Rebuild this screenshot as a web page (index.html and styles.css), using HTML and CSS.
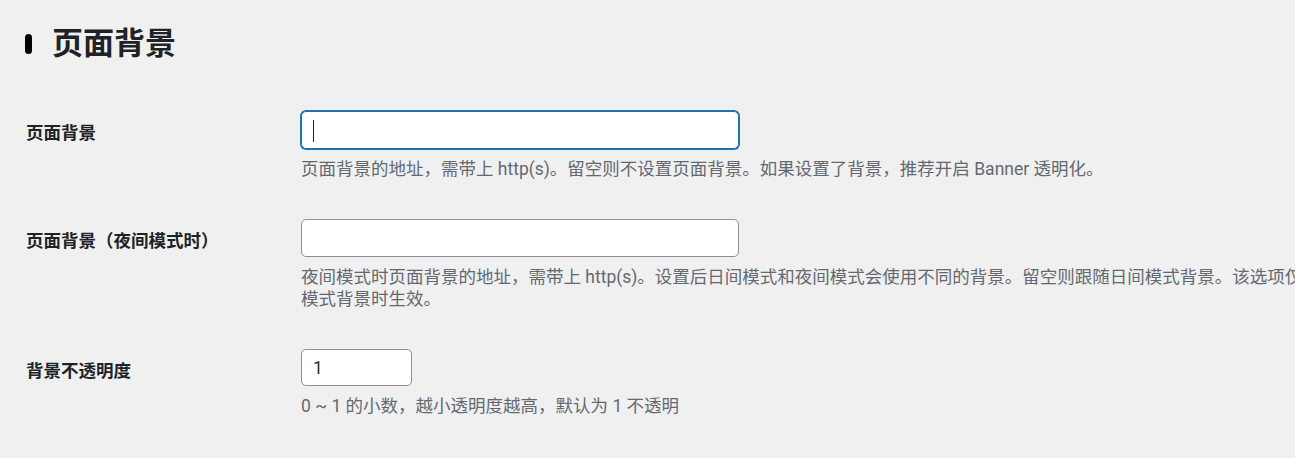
FILE: index.html
```html
<!DOCTYPE html>
<html lang="zh-CN">
<head>
<meta charset="utf-8">
<title>页面背景</title>
<link rel="stylesheet" href="styles.css">
</head>
<body>
<div class="page">
  <h2 class="title">页面背景</h2>
  <div class="settings">
    <div class="row">
      <div class="label">页面背景</div>
      <div class="field">
        <div class="input-wrap">
          <input class="text-input is-focused" type="text" value="">
          <span class="caret"></span>
        </div>
        <p class="desc">页面背景的地址，需带上 http(s)。留空则不设置页面背景。如果设置了背景，推荐开启 Banner 透明化。</p>
      </div>
    </div>
    <div class="row">
      <div class="label">页面背景（夜间模式时）</div>
      <div class="field">
        <div class="input-wrap">
          <input class="text-input" type="text" value="">
        </div>
        <p class="desc nowrap">夜间模式时页面背景的地址，需带上 http(s)。设置后日间模式和夜间模式会使用不同的背景。留空则跟随日间模式背景。该选项仅在设置了日间<br>模式背景时生效。</p>
      </div>
    </div>
    <div class="row">
      <div class="label">背景不透明度</div>
      <div class="field">
        <div class="input-wrap">
          <input class="text-input small" type="number" value="1">
        </div>
        <p class="desc">0 ~ 1 的小数，越小透明度越高，默认为 1 不透明</p>
      </div>
    </div>
  </div>
</div>
</body>
</html>
```
FILE: styles.css
```css
html, body {
  margin: 0;
  padding: 0;
  background: #f0f0f1;
  overflow: hidden;
}

.page {
  padding: 24px 0 0 26px;
  font-family: "Segoe UI", Roboto, "Noto Sans CJK SC", sans-serif;
  color: #1d2327;
}

.title {
  display: flex;
  align-items: center;
  gap: 20px;
  margin: 0;
  height: 40px;
  font-size: 31px;
  font-weight: 700;
  line-height: 40px;
  color: #1d2327;
}

.title::before {
  content: "";
  width: 7px;
  height: 20px;
  margin-left: -1px;
  border-radius: 4px;
  background: #000;
}

.settings {
  margin-top: 27px;
}

.row {
  display: grid;
  grid-template-columns: 275px 1fr;
  padding: 20px 0 19px;
}

.label {
  margin-top: 11px;
  font-size: 17.5px;
  font-weight: 700;
  line-height: 22px;
  color: #1d2327;
}

.input-wrap {
  position: relative;
  width: max-content;
}

.text-input {
  display: block;
  box-sizing: border-box;
  width: 438px;
  height: 38px;
  margin: 0;
  padding: 0 11px;
  border: 1px solid #8c8f94;
  border-radius: 5px;
  background: #fff;
  font-family: "Segoe UI", Roboto, "Noto Sans CJK SC", sans-serif;
  font-size: 17.5px;
  color: #2c3338;
  outline: none;
  caret-color: transparent;
}

.text-input.is-focused {
  border-color: #2271b1;
  box-shadow: 0 0 0 1px #2271b1;
}

.text-input.small {
  width: 111px;
  height: 37px;
  -moz-appearance: textfield;
}

.text-input.small::-webkit-inner-spin-button,
.text-input.small::-webkit-outer-spin-button {
  -webkit-appearance: none;
  margin: 0;
}

.caret {
  position: absolute;
  left: 12px;
  top: 9px;
  width: 1px;
  height: 22px;
  background: #1d2327;
}

.desc {
  margin: 9px 0 0;
  font-size: 17.5px;
  line-height: 22px;
  color: #646970;
}

.desc.nowrap {
  white-space: nowrap;
}
```
